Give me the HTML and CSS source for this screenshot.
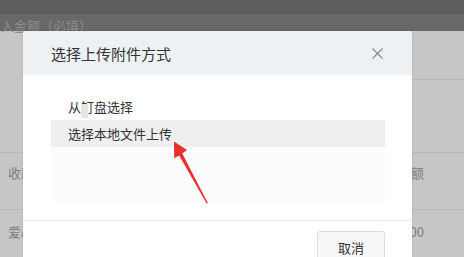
FILE: index.html
```html
<!DOCTYPE html>
<html lang="zh-CN">
<head>
<meta charset="utf-8">
<title>选择上传附件方式</title>
<link rel="stylesheet" href="styles.css">
</head>
<body>
<div class="page">
  <div class="topbar"></div>
  <div class="field"><span class="field-label">入金额（必填）</span></div>
  <div class="form"><div class="form-line"></div></div>
  <div class="table">
    <div class="trow thead"><span class="cell-l">收款</span><span class="cell-r">全额</span></div>
    <div class="trow tbody"><span class="cell-l">爱心</span><span class="cell-r">100</span></div>
  </div>
</div>

<div class="modal">
  <div class="modal-header">
    <span class="modal-title">选择上传附件方式</span>
    <svg class="close" width="11" height="11" viewBox="0 0 11 11"><path d="M0.5 0.5L10.5 10.5M10.5 0.5L0.5 10.5" stroke="#8a8a8a" stroke-width="1.2" fill="none"/></svg>
  </div>
  <div class="modal-body">
    <div class="list">
      <div class="item">从<span class="masked">钉</span>盘选择</div>
      <div class="item active">选择本地文件上传</div>
      <div class="filler"></div>
    </div>
  </div>
  <div class="modal-footer">
    <button class="btn">取消</button>
  </div>
</div>

<svg class="arrow" width="464" height="257" viewBox="0 0 464 257">
  <polygon points="174,141.5 187,150 182.3,153.6 207.8,203 206.6,203.6 179.2,155.4 174.2,158.2" fill="#e8312b"/>
</svg>
</body>
</html>
```

FILE: styles.css
```css
html, body {
  margin: 0;
  padding: 0;
}
body {
  width: 464px;
  height: 257px;
  overflow: hidden;
  position: relative;
  background: #c6c6c6;
  font-family: "Noto Sans CJK SC", "Noto Sans", sans-serif;
}
.page {
  display: flex;
  flex-direction: column;
}
.topbar {
  height: 13px;
  background: #5e5e5e;
  border-bottom: 1px solid #575757;
}
.field {
  height: 17px;
  background: #686868;
  display: flex;
  align-items: flex-end;
  padding-left: 1px;
}
.field-label {
  font-size: 13px;
  line-height: 17px;
  color: #8c8c8c;
  margin-bottom: -3px;
}
.form {
  height: 49px;
  display: flex;
  align-items: flex-end;
}
.form-line {
  margin-left: 400px;
  flex: 1;
  border-bottom: 1px solid #b9b9b9;
}
.table {
  margin-top: 72px;
  display: flex;
  flex-direction: column;
}
.trow {
  display: flex;
  justify-content: space-between;
  font-size: 13px;
  color: #7c7c7c;
  padding: 0 6px 0 8px;
}
.thead {
  height: 56px;
  border-top: 1px solid #b9b9b9;
  border-bottom: 1px solid #b9b9b9;
  align-items: center;
}
.thead span {
  margin-top: -18px;
}
.tbody {
  height: 46px;
  padding-top: 12px;
}
.cell-r {
  margin-right: 34px;
}
.modal {
  position: absolute;
  left: 23px;
  top: 31px;
  width: 389px;
  height: 240px;
  background: #ffffff;
  border-radius: 3px;
  box-shadow: 0 0 2px rgba(0, 0, 0, 0.15);
  display: flex;
  flex-direction: column;
}
.modal-header {
  height: 44px;
  background: #eef1f3;
  border-radius: 3px 3px 0 0;
  display: flex;
  align-items: center;
  justify-content: space-between;
  padding: 0 29px 0 28px;
  flex-shrink: 0;
}
.modal-title {
  font-size: 15px;
  color: #333333;
}
.close {
  display: block;
}
.modal-body {
  padding: 18px 27px 18px 28px;
}
.list {
  display: flex;
  flex-direction: column;
}
.item {
  height: 27px;
  line-height: 27px;
  padding-left: 17px;
  font-size: 13px;
  color: #333333;
}
.item.active {
  background: #efefef;
}
.masked {
  position: relative;
}
.masked::after {
  content: "";
  position: absolute;
  left: 0;
  top: 7px;
  width: 7px;
  height: 14px;
  background: #e6e6e6;
}
.filler {
  height: 55px;
  background: #fcfcfc;
}
.modal-footer {
  border-top: 1px solid #e9e9e9;
  padding: 10px 27px 0 0;
  display: flex;
  justify-content: flex-end;
}
.btn {
  width: 68px;
  height: 32px;
  border: 1px solid #dcdcdc;
  border-radius: 3px;
  background: #f8f8f8;
  font-family: "Noto Sans CJK SC", "Noto Sans", sans-serif;
  font-size: 13px;
  color: #333333;
  padding: 0;
}
.arrow {
  position: absolute;
  left: 0;
  top: 0;
  pointer-events: none;
}
```
